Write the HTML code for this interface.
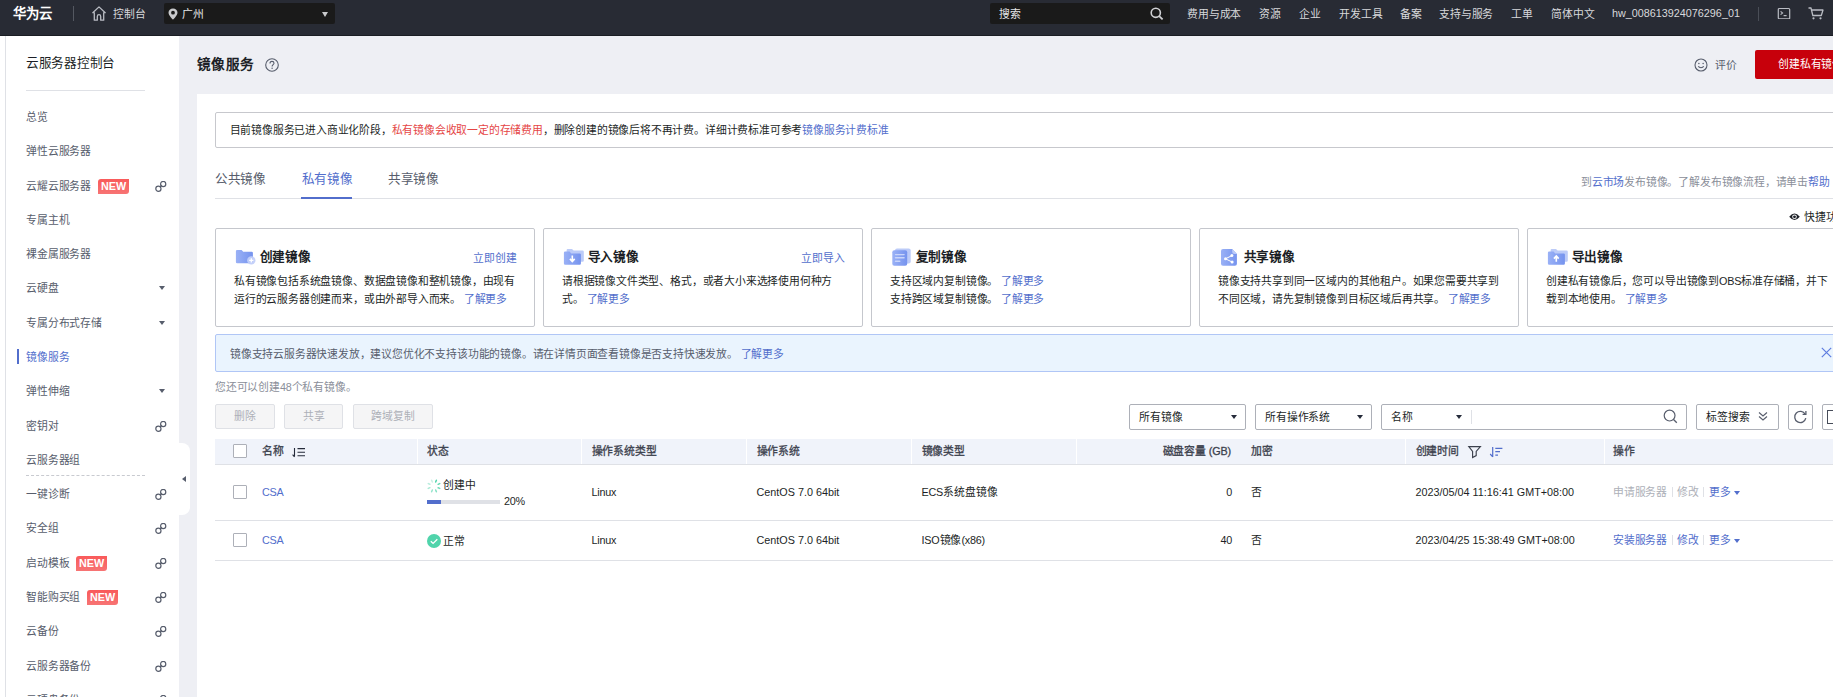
<!DOCTYPE html>
<html lang="zh-CN"><head><meta charset="utf-8">
<style>
*{box-sizing:border-box;margin:0;padding:0}
html,body{width:1833px;height:697px;overflow:hidden}
body{position:relative;background:#eeeff4;font-family:"Liberation Sans",sans-serif;font-size:10.8px;color:#1c1f26;letter-spacing:-0.2px}
.a{position:absolute;white-space:nowrap}
#hd{position:absolute;left:0;top:0;width:1833px;height:36px;background:#282b34;border-bottom:1px solid #1a1d23}
#hd .t{position:absolute;top:0;height:36px;line-height:29px;color:#d8d9dc;font-size:10.8px}
#sb{position:absolute;left:0;top:36px;width:179px;height:661px;background:#fff}
#sb .bl{position:absolute;left:5px;top:0;width:1px;height:661px;background:#dfe1e6}
#sb .it{position:absolute;left:26px;height:16px;line-height:16px;color:#575d6c;font-size:10.8px;white-space:nowrap}
.new{display:inline-block;position:absolute;height:15px;line-height:15px;margin-top:1px;padding:0 3px;background:linear-gradient(#f95a5a,#f77474);color:#fff;font-weight:bold;font-size:10.8px;letter-spacing:0;border-radius:3px 0 3px 0}
.lnk{position:absolute;left:155px;width:12px;height:12px;margin-top:1px}
.dd{position:absolute;left:159px;width:0;height:0;border-left:3px solid transparent;border-right:3px solid transparent;border-top:4px solid #575d6c}
#pn{position:absolute;left:197px;top:94px;width:1636px;height:603px;background:#fff}
.blue{color:#526ecc!important}
.tx{white-space:nowrap}
.card{border:1px solid #c5c7cd;background:#fff;border-radius:2px}
.btn{border:1px solid #dfe1e6;background:#f5f5f6;color:#adb0b8;text-align:center;line-height:23px;border-radius:2px}
.bi{display:inline-block;white-space:nowrap}
.j{text-align:justify;text-align-last:justify;white-space:nowrap}
.sel{border:1px solid #adb0b8;background:#fff;color:#1c1f26;border-radius:2px}
.sel span{position:absolute;left:9px;top:4px;line-height:16px}
.sel i{position:absolute;left:101px;top:10px;width:0;height:0;border-left:3px solid transparent;border-right:3px solid transparent;border-top:4px solid #252b3a}
.cb{width:14px;height:14px;border:1px solid #adb0b8;border-radius:1px;background:#fff}
.th{top:443px;height:16px;line-height:16px;color:#3c414d;-webkit-text-stroke:0.3px #3c414d}
.td{height:16px;line-height:16px;color:#1c1f26}
.sep{display:inline-block;width:1px;height:10px;background:#dfe1e6;margin:0 4.5px;vertical-align:-1px}

</style></head><body>

<!-- HEADER -->
<div id="hd">
  <div class="j t" style="width:39.3px;left:12.5px;font-size:13.4px;letter-spacing:0;font-weight:bold;color:#fff;line-height:28px">华为云</div>
  <div style="position:absolute;left:73px;top:6px;width:1px;height:15px;background:#545861"></div>
  <svg class="a" style="left:92px;top:6px" width="14" height="15" viewBox="0 0 14 15"><path d="M7 0.9 L13.2 6.7 H11.7 V14.2 H8.7 V10.4 A1.7 1.7 0 0 0 5.3 10.4 V14.2 H2.3 V6.7 H0.8 Z" fill="none" stroke="#b9bcc3" stroke-width="1.3" stroke-linejoin="round"/></svg>
  <div class="j t" style="width:32.7px;left:113px">控制台</div>
  <div style="position:absolute;left:164px;top:3px;width:171px;height:21px;background:#1a1a1a;border-radius:2px"></div>
  <svg class="a" style="left:168px;top:7.5px" width="10" height="12" viewBox="0 0 10 12"><path d="M5 0.4 C2.4 0.4 0.5 2.3 0.5 4.7 C0.5 7.4 5 11.6 5 11.6 C5 11.6 9.5 7.4 9.5 4.7 C9.5 2.3 7.6 0.4 5 0.4 Z M5 2.8 A1.9 1.9 0 1 1 5 6.6 A1.9 1.9 0 1 1 5 2.8 Z" fill="#c9cacd" fill-rule="evenodd"/></svg>
  <div class="j t" style="width:21.9px;left:182px;color:#e6e6e8">广州</div>
  <div style="position:absolute;left:322px;top:12px;width:0;height:0;border-left:3.6px solid transparent;border-right:3.6px solid transparent;border-top:5px solid #c9cacd"></div>

  <div style="position:absolute;left:990px;top:3px;width:180px;height:21px;background:#1a1a1a;border-radius:2px"></div>
  <div class="j t" style="width:21.9px;left:999px;color:#e6e6e8">搜索</div>
  <svg class="a" style="left:1150px;top:7px" width="14" height="13" viewBox="0 0 14 13"><circle cx="5.8" cy="5.8" r="4.6" fill="none" stroke="#d0d1d4" stroke-width="1.6"/><path d="M9.2 9.2 L12.6 12.4" stroke="#d0d1d4" stroke-width="1.8"/></svg>
  <div class="j t" style="width:54.3px;left:1187px">费用与成本</div>
  <div class="j t" style="width:21.9px;left:1259px">资源</div>
  <div class="j t" style="width:21.9px;left:1299px">企业</div>
  <div class="j t" style="width:43.5px;left:1339px">开发工具</div>
  <div class="j t" style="width:21.9px;left:1400px">备案</div>
  <div class="j t" style="width:54.3px;left:1439px">支持与服务</div>
  <div class="j t" style="width:21.9px;left:1511px">工单</div>
  <div class="j t" style="width:43.5px;left:1551px">简体中文</div>
  <div class="t" style="left:1612px;letter-spacing:0;line-height:27.5px">hw_008613924076296_01</div>
  <div style="position:absolute;left:1758px;top:7px;width:1px;height:14px;background:#4a4e57"></div>
  <svg class="a" style="left:1777px;top:7px" width="14" height="12" viewBox="0 0 14 12"><rect x="1.3" y="1.5" width="11.4" height="10.4" rx="1" fill="none" stroke="#b9bcc3" stroke-width="1.2"/><path d="M3.6 4.3 L5.6 6 L3.6 7.7" fill="none" stroke="#b9bcc3" stroke-width="1.1"/><path d="M6.6 8.6 H9.6" stroke="#b9bcc3" stroke-width="1.2"/></svg>
  <svg class="a" style="left:1808px;top:7px" width="16" height="13" viewBox="0 0 16 13"><path d="M0.5 1 H3 L4.8 8.5 H13.3 L15 3 H3.8" fill="none" stroke="#b9bcc3" stroke-width="1.3" stroke-linejoin="round"/><circle cx="5.5" cy="11.3" r="1.1" fill="#b9bcc3"/><circle cx="12.5" cy="11.3" r="1.1" fill="#b9bcc3"/></svg>
</div>

<!-- SIDEBAR -->
<div id="sb">
  <div class="bl"></div>
  <div class="j it" style="width:88.9px;top:17px;font-size:12.6px;letter-spacing:-0.35px;color:#1c1f26;height:20px;line-height:20px">云服务器控制台</div>
  <div style="position:absolute;left:26px;top:54px;width:119px;height:1px;background:#dfe1e6"></div>
  <div class="j it" style="width:21.9px;top:73.0px">总览</div>
  <div class="j it" style="width:65.1px;top:107.3px">弹性云服务器</div>
  <div class="j it" style="width:65.1px;top:141.6px">云耀云服务器</div>
  <div class="new" style="left:98px;top:142.1px">NEW</div>
  <svg class="lnk" style="top:143.6px" viewBox="0 0 12 12"><g fill="none" stroke="#575d6c" stroke-width="1.2"><circle cx="3.4" cy="7.7" r="2.6"/><circle cx="8.2" cy="3" r="2.6"/><path d="M4.8 6.3 L6.8 4.4"/></g></svg>
  <div class="j it" style="width:43.5px;top:175.8px">专属主机</div>
  <div class="j it" style="width:65.1px;top:210.1px">裸金属服务器</div>
  <div class="j it" style="width:32.7px;top:244.4px">云硬盘</div>
  <div class="dd" style="top:250.4px"></div>
  <div class="j it" style="width:75.9px;top:278.7px">专属分布式存储</div>
  <div class="dd" style="top:284.7px"></div>
  <div style="position:absolute;left:17px;top:312.8px;width:2px;height:15.5px;background:#526ecc"></div>
  <div class="j it" style="width:43.5px;top:313.0px;color:#526ecc">镜像服务</div>
  <div class="j it" style="width:43.5px;top:347.2px">弹性伸缩</div>
  <div class="dd" style="top:353.3px"></div>
  <div class="j it" style="width:32.7px;top:381.5px">密钥对</div>
  <svg class="lnk" style="top:383.5px" viewBox="0 0 12 12"><g fill="none" stroke="#575d6c" stroke-width="1.2"><circle cx="3.4" cy="7.7" r="2.6"/><circle cx="8.2" cy="3" r="2.6"/><path d="M4.8 6.3 L6.8 4.4"/></g></svg>
  <div class="j it" style="width:54.3px;top:415.8px">云服务器组</div>
  <div class="j it" style="width:43.5px;top:450.1px">一键诊断</div>
  <svg class="lnk" style="top:452.1px" viewBox="0 0 12 12"><g fill="none" stroke="#575d6c" stroke-width="1.2"><circle cx="3.4" cy="7.7" r="2.6"/><circle cx="8.2" cy="3" r="2.6"/><path d="M4.8 6.3 L6.8 4.4"/></g></svg>
  <div class="j it" style="width:32.7px;top:484.4px">安全组</div>
  <svg class="lnk" style="top:486.4px" viewBox="0 0 12 12"><g fill="none" stroke="#575d6c" stroke-width="1.2"><circle cx="3.4" cy="7.7" r="2.6"/><circle cx="8.2" cy="3" r="2.6"/><path d="M4.8 6.3 L6.8 4.4"/></g></svg>
  <div class="j it" style="width:43.5px;top:518.6px">启动模板</div>
  <div class="new" style="left:76px;top:519.1px">NEW</div>
  <svg class="lnk" style="top:520.6px" viewBox="0 0 12 12"><g fill="none" stroke="#575d6c" stroke-width="1.2"><circle cx="3.4" cy="7.7" r="2.6"/><circle cx="8.2" cy="3" r="2.6"/><path d="M4.8 6.3 L6.8 4.4"/></g></svg>
  <div class="j it" style="width:54.3px;top:552.9px">智能购买组</div>
  <div class="new" style="left:87px;top:553.4px">NEW</div>
  <svg class="lnk" style="top:554.9px" viewBox="0 0 12 12"><g fill="none" stroke="#575d6c" stroke-width="1.2"><circle cx="3.4" cy="7.7" r="2.6"/><circle cx="8.2" cy="3" r="2.6"/><path d="M4.8 6.3 L6.8 4.4"/></g></svg>
  <div class="j it" style="width:32.7px;top:587.2px">云备份</div>
  <svg class="lnk" style="top:589.2px" viewBox="0 0 12 12"><g fill="none" stroke="#575d6c" stroke-width="1.2"><circle cx="3.4" cy="7.7" r="2.6"/><circle cx="8.2" cy="3" r="2.6"/><path d="M4.8 6.3 L6.8 4.4"/></g></svg>
  <div class="j it" style="width:65.1px;top:621.5px">云服务器备份</div>
  <svg class="lnk" style="top:623.5px" viewBox="0 0 12 12"><g fill="none" stroke="#575d6c" stroke-width="1.2"><circle cx="3.4" cy="7.7" r="2.6"/><circle cx="8.2" cy="3" r="2.6"/><path d="M4.8 6.3 L6.8 4.4"/></g></svg>
  <div class="j it" style="width:54.3px;top:655.8px">云硬盘备份</div>
  <svg class="lnk" style="top:657.8px" viewBox="0 0 12 12"><g fill="none" stroke="#575d6c" stroke-width="1.2"><circle cx="3.4" cy="7.7" r="2.6"/><circle cx="8.2" cy="3" r="2.6"/><path d="M4.8 6.3 L6.8 4.4"/></g></svg>
  <div style="position:absolute;left:26px;top:439.4px;width:119px;height:0;border-top:1px dashed #c8cad0"></div>
  <div style="position:absolute;left:179px;top:406.8px;width:11px;height:72px;background:#fff;border-radius:0 8px 8px 0"></div>
  <div style="position:absolute;left:182px;top:439.9px;width:0;height:0;border-top:3px solid transparent;border-bottom:3px solid transparent;border-right:4px solid #575d6c"></div>
</div>

<!-- PANEL -->
<div id="pn"></div>
<!-- TITLE AREA -->
<div class="j a tx" style="width:57.5px;left:197px;top:55.5px;height:18px;line-height:18px;font-size:13.6px;letter-spacing:0.3px;font-weight:bold;color:#1c1f26">镜像服务</div>
<svg class="a" style="left:265px;top:58px" width="14" height="14" viewBox="0 0 14 14"><circle cx="7" cy="7" r="6.3" fill="none" stroke="#575d6c" stroke-width="1.1"/><path d="M5 5.4 C5 4.1 5.9 3.4 7 3.4 C8.1 3.4 9 4.1 9 5.2 C9 6.5 7.1 6.7 7.1 8.4" fill="none" stroke="#575d6c" stroke-width="1.1"/><circle cx="7.1" cy="10.3" r="0.7" fill="#575d6c"/></svg>
<svg class="a" style="left:1694px;top:58px" width="14" height="14" viewBox="0 0 14 14"><circle cx="7" cy="7" r="6" fill="none" stroke="#575d6c" stroke-width="1.1"/><circle cx="4.9" cy="5.6" r="0.75" fill="#575d6c"/><circle cx="9.1" cy="5.6" r="0.75" fill="#575d6c"/><path d="M4.3 8.3 C5.3 10.2 8.7 10.2 9.7 8.3" fill="none" stroke="#575d6c" stroke-width="1.1"/></svg>
<div class="j a tx" style="width:21.9px;left:1715px;top:57px;height:16px;line-height:16px;color:#575d6c">评价</div>
<div class="a" style="left:1755px;top:50px;width:110px;height:29px;background:#c7000b;border-radius:2px"></div>
<div class="j a tx" style="width:65.1px;left:1778px;top:55.8px;height:16px;line-height:16px;color:#fff">创建私有镜像</div>

<!-- NOTICE -->
<div class="a" style="left:215px;top:112px;width:1640px;height:36px;border:1px solid #c7c8cd;border-radius:2px"></div>
<div class="j a tx" style="width:659.1px;left:229.5px;top:122px;height:16px;line-height:16px;color:#1c1f26">目前镜像服务已进入商业化阶段，<span style="color:#e54545">私有镜像会收取一定的存储费用</span>，删除创建的镜像后将不再计费。详细计费标准可参考<span class="blue">镜像服务计费标准</span></div>

<!-- TABS -->
<div class="j a tx" style="width:50.9px;left:215px;top:170px;height:18px;line-height:18px;font-size:12.6px;letter-spacing:-0.35px;color:#575d6c">公共镜像</div>
<div class="j a tx" style="width:50.9px;left:301.5px;top:170px;height:18px;line-height:18px;font-size:12.6px;letter-spacing:-0.35px;color:#526ecc">私有镜像</div>
<div class="j a tx" style="width:50.9px;left:388px;top:170px;height:18px;line-height:18px;font-size:12.6px;letter-spacing:-0.35px;color:#575d6c">共享镜像</div>
<div class="a" style="left:215px;top:198px;width:1640px;height:1px;background:#dfe1e6"></div>
<div class="a" style="left:301px;top:196.5px;width:51px;height:2px;background:#526ecc"></div>
<div class="j a tx" style="width:248.7px;left:1581px;top:174px;height:16px;line-height:16px;color:#8a8e99">到<span class="blue">云市场</span>发布镜像。了解发布镜像流程，请单击<span class="blue">帮助</span></div>
<svg class="a" style="left:1789px;top:212.5px" width="11" height="8" viewBox="0 0 11 8"><path d="M0.2 3.8 Q5.5 -2.6 10.8 3.8 Q5.5 10.2 0.2 3.8 Z" fill="#1c1f26"/><circle cx="5.5" cy="3.8" r="2.3" fill="#fff"/><circle cx="5.5" cy="3.8" r="1.4" fill="#1c1f26"/></svg>
<div class="j a tx" style="width:43.5px;left:1804px;top:208.5px;height:16px;line-height:16px;color:#1c1f26">快捷功能</div>

<!-- CARDS -->
<div class="a card" style="left:215px;top:228px;width:320px;height:99px"></div>
<svg class="a" style="left:235px;top:249px;overflow:visible" width="22" height="18" viewBox="0 0 22 18"><defs><linearGradient id="gC" x1="0" y1="0" x2="1" y2="0"><stop offset="0" stop-color="#9ab1f6"/><stop offset="1" stop-color="#7593ee"/></linearGradient></defs><path d="M0.9 2.2 Q0.9 1.0 2.1 1.0 H6.6 L8.2 2.8 H16.7 Q17.9 2.8 17.9 4.0 V13.0 Q17.9 14.200000000000001 16.7 14.200000000000001 H2.1 Q0.9 14.200000000000001 0.9 13.0 Z" fill="url(#gC)"/><circle cx="16.3" cy="11.4" r="4.2" fill="#c2cff9" opacity="0.95"/><path d="M14.2 11.4 H18.4 M16.3 9.3 V13.5" stroke="#fff" stroke-width="1.3"/></svg>
<div class="j a tx" style="width:50.9px;left:259.5px;top:247.5px;height:18px;line-height:18px;font-size:12.6px;letter-spacing:-0.35px;font-weight:bold;color:#1c1f26">创建镜像</div>
<div class="j a tx blue" style="width:43.5px;left:473px;top:250px;height:16px;line-height:16px">立即创建</div>
<div class="j a tx" style="width:281.1px;left:234px;top:272px;line-height:18px;color:#1c1f26">私有镜像包括系统盘镜像、数据盘镜像和整机镜像，由现有</div>
<div class="j a tx" style="width:273.1px;left:234px;top:290px;line-height:18px;color:#1c1f26">运行的云服务器创建而来，或由外部导入而来。 <span class="blue">了解更多</span></div>
<div class="a card" style="left:543px;top:228px;width:320px;height:99px"></div>
<svg class="a" style="left:563px;top:249px;overflow:visible" width="22" height="18" viewBox="0 0 22 18"><defs><linearGradient id="gI" x1="0" y1="0" x2="1" y2="0"><stop offset="0" stop-color="#9ab1f6"/><stop offset="1" stop-color="#7593ee"/></linearGradient></defs><path d="M3.6 1.2 Q3.6 0 4.8 0 H9 L10.6 1.6 H19.6 Q20.8 1.6 20.8 2.8 V11.6 Q20.8 12.8 19.6 12.8 H4 Z" fill="#bccbf8"/><path d="M0.9 3.8 Q0.9 2.6 2.1 2.6 H6.6 L8.2 4.4 H16.7 Q17.9 4.4 17.9 5.6 V14.6 Q17.9 15.8 16.7 15.8 H2.1 Q0.9 15.8 0.9 14.6 Z" fill="url(#gI)"/><path d="M9.3 6.6 V12.4 M6.9 9.9 L9.3 12.5 L11.7 9.9" fill="none" stroke="#fff" stroke-width="1.6"/></svg>
<div class="j a tx" style="width:50.9px;left:587.5px;top:247.5px;height:18px;line-height:18px;font-size:12.6px;letter-spacing:-0.35px;font-weight:bold;color:#1c1f26">导入镜像</div>
<div class="j a tx blue" style="width:43.5px;left:801px;top:250px;height:16px;line-height:16px">立即导入</div>
<div class="j a tx" style="width:270.3px;left:562px;top:272px;line-height:18px;color:#1c1f26">请根据镜像文件类型、格式，或者大小来选择使用何种方</div>
<div class="j a tx" style="width:67.9px;left:562px;top:290px;line-height:18px;color:#1c1f26">式。 <span class="blue">了解更多</span></div>
<div class="a card" style="left:871px;top:228px;width:320px;height:99px"></div>
<svg class="a" style="left:891px;top:249px;overflow:visible" width="22" height="18" viewBox="0 0 22 18"><defs><linearGradient id="gP" x1="0" y1="0" x2="1" y2="0"><stop offset="0" stop-color="#9ab1f6"/><stop offset="1" stop-color="#7593ee"/></linearGradient></defs><rect x="4" y="-0.6" width="15.7" height="15.2" rx="2" fill="#bccbf8"/><rect x="1.3" y="1.2" width="14.9" height="15.6" rx="2" fill="url(#gP)"/><path d="M4.5 5.6 H13.1 M4.5 8.8 H13.1 M4.5 12.2 H8.8" stroke="#c9d5fa" stroke-width="1.4" stroke-linecap="round"/></svg>
<div class="j a tx" style="width:50.9px;left:915.5px;top:247.5px;height:18px;line-height:18px;font-size:12.6px;letter-spacing:-0.35px;font-weight:bold;color:#1c1f26">复制镜像</div>
<div class="j a tx" style="width:154.3px;left:890px;top:272px;line-height:18px;color:#1c1f26">支持区域内复制镜像。 <span class="blue">了解更多</span></div>
<div class="j a tx" style="width:154.3px;left:890px;top:290px;line-height:18px;color:#1c1f26">支持跨区域复制镜像。 <span class="blue">了解更多</span></div>
<div class="a card" style="left:1199px;top:228px;width:320px;height:99px"></div>
<svg class="a" style="left:1219px;top:249px;overflow:visible" width="22" height="18" viewBox="0 0 22 18"><defs><linearGradient id="gS" x1="0" y1="0" x2="1" y2="0"><stop offset="0" stop-color="#9ab1f6"/><stop offset="1" stop-color="#7593ee"/></linearGradient></defs><path d="M4 0.1 H13.2 L17.9 4.9 V14.8 Q17.9 16.8 15.9 16.8 H4 Q2 16.8 2 14.8 V2.1 Q2 0.1 4 0.1 Z" fill="url(#gS)"/><path d="M13.2 0.1 L17.9 4.9 H15.2 Q13.2 4.9 13.2 2.9 Z" fill="#bccbf8"/><path d="M12.9 6.6 L6.5 9.8 L13.1 13" fill="none" stroke="#fff" stroke-width="1"/><circle cx="12.9" cy="6.6" r="1.5" fill="#fff"/><circle cx="6.5" cy="9.8" r="1.5" fill="#fff"/><circle cx="13.1" cy="13" r="1.5" fill="#fff"/></svg>
<div class="j a tx" style="width:50.9px;left:1243.5px;top:247.5px;height:18px;line-height:18px;font-size:12.6px;letter-spacing:-0.35px;font-weight:bold;color:#1c1f26">共享镜像</div>
<div class="j a tx" style="width:281.1px;left:1218px;top:272px;line-height:18px;color:#1c1f26">镜像支持共享到同一区域内的其他租户。如果您需要共享到</div>
<div class="j a tx" style="width:273.1px;left:1218px;top:290px;line-height:18px;color:#1c1f26">不同区域，请先复制镜像到目标区域后再共享。 <span class="blue">了解更多</span></div>
<div class="a card" style="left:1527px;top:228px;width:320px;height:99px"></div>
<svg class="a" style="left:1547px;top:249px;overflow:visible" width="22" height="18" viewBox="0 0 22 18"><defs><linearGradient id="gE" x1="0" y1="0" x2="1" y2="0"><stop offset="0" stop-color="#9ab1f6"/><stop offset="1" stop-color="#7593ee"/></linearGradient></defs><path d="M3.6 1.2 Q3.6 0 4.8 0 H9 L10.6 1.6 H19.6 Q20.8 1.6 20.8 2.8 V11.6 Q20.8 12.8 19.6 12.8 H4 Z" fill="#bccbf8"/><path d="M0.9 3.8 Q0.9 2.6 2.1 2.6 H6.6 L8.2 4.4 H16.7 Q17.9 4.4 17.9 5.6 V14.6 Q17.9 15.8 16.7 15.8 H2.1 Q0.9 15.8 0.9 14.6 Z" fill="url(#gE)"/><path d="M9.3 12.8 V7.2 M6.9 9.6 L9.3 7 L11.7 9.6" fill="none" stroke="#fff" stroke-width="1.6"/></svg>
<div class="j a tx" style="width:50.9px;left:1571.5px;top:247.5px;height:18px;line-height:18px;font-size:12.6px;letter-spacing:-0.35px;font-weight:bold;color:#1c1f26">导出镜像</div>
<div class="j a tx" style="width:281.7px;left:1546px;top:272px;line-height:18px;color:#1c1f26">创建私有镜像后，您可以导出镜像到OBS标准存储桶，并下</div>
<div class="j a tx" style="width:121.9px;left:1546px;top:290px;line-height:18px;color:#1c1f26">载到本地使用。 <span class="blue">了解更多</span></div>

<!-- INFO BAR -->
<div class="a" style="left:215px;top:334px;width:1640px;height:38px;background:#eaf4fe;border:1px solid #b0c6f6;border-radius:2px"></div>
<div class="j a tx" style="width:553.9px;left:230px;top:345.5px;height:16px;line-height:16px;color:#575d6c">镜像支持云服务器快速发放，建议您优化不支持该功能的镜像。请在详情页面查看镜像是否支持快速发放。 <span class="blue">了解更多</span></div>
<svg class="a" style="left:1821px;top:347px" width="11" height="11" viewBox="0 0 11 11"><path d="M0.8 0.8 L10.2 10.2 M10.2 0.8 L0.8 10.2" stroke="#5e7ce0" stroke-width="1.2"/></svg>

<div class="j a tx" style="width:141.5px;left:215px;top:378.5px;height:16px;line-height:16px;color:#8a8e99">您还可以创建48个私有镜像。</div>

<!-- BUTTONS -->
<div class="a btn" style="left:215px;top:404px;width:59.5px;height:25px"><span class="j bi" style="width:21.9px">删除</span></div>
<div class="a btn" style="left:284px;top:404px;width:59px;height:25px"><span class="j bi" style="width:21.9px">共享</span></div>
<div class="a btn" style="left:352.5px;top:404px;width:80.5px;height:25px"><span class="j bi" style="width:43.5px">跨域复制</span></div>

<!-- FILTERS -->
<div class="a sel" style="left:1129px;top:404px;width:117px;height:26px"><span class="j" style="width:43.5px">所有镜像</span><i></i></div>
<div class="a sel" style="left:1255px;top:404px;width:117px;height:26px"><span class="j" style="width:65.1px">所有操作系统</span><i></i></div>
<div class="a sel" style="left:1381px;top:404px;width:306px;height:26px"><span class="j" style="width:21.9px">名称</span><i style="left:74px"></i></div>
<div class="a" style="left:1471px;top:410px;width:1px;height:14px;background:#dfe1e6"></div>
<svg class="a" style="left:1663px;top:409px" width="15" height="15" viewBox="0 0 15 15"><circle cx="6.6" cy="6.6" r="5.4" fill="none" stroke="#575d6c" stroke-width="1.2"/><path d="M10.5 10.5 L13.8 13.8" stroke="#575d6c" stroke-width="1.3"/></svg>
<div class="a sel" style="left:1696px;top:404px;width:83px;height:26px"><span class="j" style="width:43.5px">标签搜索</span></div>
<svg class="a" style="left:1758px;top:411px" width="10" height="11" viewBox="0 0 10 11"><path d="M1 1.5 L5 5 L9 1.5 M1 5.5 L5 9 L9 5.5" fill="none" stroke="#575d6c" stroke-width="1.1"/></svg>
<div class="a sel" style="left:1788px;top:404px;width:25px;height:26px"></div>
<svg class="a" style="left:1793px;top:410px" width="15" height="14" viewBox="0 0 15 14"><path d="M12.2 4.2 A5.6 5.6 0 1 0 12.8 8.2" fill="none" stroke="#575d6c" stroke-width="1.3"/><path d="M9.6 4.4 H12.9 V1.1" fill="none" stroke="#575d6c" stroke-width="1.3"/></svg>
<div class="a sel" style="left:1822px;top:404px;width:25px;height:26px"></div>
<div class="a" style="left:1827px;top:410px;width:9px;height:14px;border:1.5px solid #464c59"></div>

<!-- TABLE -->
<div class="a" style="left:215px;top:439px;width:1640px;height:26px;background:#f0f3fa;border-bottom:1px solid #dfe1e6"></div>
<div class="a" style="left:416.5px;top:439px;width:1.5px;height:25px;background:#fff"></div>
<div class="a" style="left:580.5px;top:439px;width:1.5px;height:25px;background:#fff"></div>
<div class="a" style="left:745.5px;top:439px;width:1.5px;height:25px;background:#fff"></div>
<div class="a" style="left:910.5px;top:439px;width:1.5px;height:25px;background:#fff"></div>
<div class="a" style="left:1075.5px;top:439px;width:1.5px;height:25px;background:#fff"></div>
<div class="a" style="left:1404.5px;top:439px;width:1.5px;height:25px;background:#fff"></div>
<div class="a" style="left:1603.5px;top:439px;width:1.5px;height:25px;background:#fff"></div>
<div class="a cb" style="left:233px;top:444px"></div>
<div class="j a th" style="width:21.9px;left:262px">名称</div>
<svg class="a" style="left:291.5px;top:446.8px" width="14" height="11" viewBox="0 0 14 11"><path d="M2.5 1 V9.6 M0.6 7.6 L2.5 9.8" fill="none" stroke="#252b3a" stroke-width="1.1"/><path d="M5.5 1.6 H13 M5.5 5.2 H13 M5.5 8.8 H13" stroke="#252b3a" stroke-width="1.1"/></svg>
<div class="j a th" style="width:21.9px;left:426.5px">状态</div>
<div class="j a th" style="width:65.1px;left:591.5px">操作系统类型</div>
<div class="j a th" style="width:43.5px;left:756.5px">操作系统</div>
<div class="j a th" style="width:43.5px;left:921.5px">镜像类型</div>
<div class="j a th" style="width:68.3px;left:1162.5px">磁盘容量 (GB)</div>
<div class="j a th" style="width:21.9px;left:1250.5px">加密</div>
<div class="j a th" style="width:43.5px;left:1415.5px">创建时间</div>
<svg class="a" style="left:1467px;top:445px" width="15" height="14" viewBox="0 0 15 14"><path d="M1.8 1.6 H13.4 L9.2 6.4 V10.6 L5.6 12.6 V6.4 Z" fill="none" stroke="#3c414d" stroke-width="1.15" stroke-linejoin="miter"/></svg>
<svg class="a" style="left:1489px;top:446px" width="15" height="12" viewBox="0 0 15 12"><path d="M3.7 1 V11 M1.2 8 L3.7 10.8" fill="none" stroke="#526ecc" stroke-width="1.2"/><path d="M6.3 2.4 H13.4 M6.3 5.7 H11 M6.3 9.1 H9" stroke="#526ecc" stroke-width="1.2"/></svg>
<div class="j a th" style="width:21.9px;left:1613px">操作</div>

<!-- ROW 1 -->
<div class="a" style="left:215px;top:520px;width:1640px;height:1px;background:#dfe1e6"></div>
<div class="a cb" style="left:233px;top:485px"></div>
<div class="a td blue" style="left:262px;top:484px">CSA</div>
<svg class="a" style="left:427px;top:479px" width="14" height="14" viewBox="0 0 14 14"><g stroke="#50d4ab" stroke-width="1.5" stroke-linecap="round" transform="rotate(22.5 7 7)"><path d="M7 0.8 V2.6" opacity="1"/><path d="M11.4 2.6 L10.1 3.9" opacity=".9"/><path d="M13.2 7 H11.4" opacity=".8"/><path d="M11.4 11.4 L10.1 10.1" opacity=".7"/><path d="M7 13.2 V11.4" opacity=".6"/><path d="M2.6 11.4 L3.9 10.1" opacity=".5"/><path d="M0.8 7 H2.6" opacity=".4"/><path d="M2.6 2.6 L3.9 3.9" opacity=".3"/></g></svg>
<div class="j a td" style="width:32.7px;left:443px;top:477px">创建中</div>
<div class="a" style="left:427px;top:500px;width:73px;height:4px;background:#dfe1e6"></div>
<div class="a" style="left:427px;top:500px;width:14px;height:4px;background:#526ecc"></div>
<div class="a td" style="left:504px;top:493px">20%</div>
<div class="a td" style="left:591.5px;top:484px">Linux</div>
<div class="a td" style="left:756.5px;top:484px;letter-spacing:0">CentOS 7.0 64bit</div>
<div class="j a td" style="width:75.9px;left:921.5px;top:484px">ECS系统盘镜像</div>
<div class="a td" style="left:1182px;top:484px;width:50px;text-align:right">0</div>
<div class="j a td" style="width:11.1px;left:1250.5px;top:484px">否</div>
<div class="a td" style="left:1415.5px;top:484px;letter-spacing:0">2023/05/04 11:16:41 GMT+08:00</div>
<div class="j a td" style="width:117.5px;left:1613px;top:484px;color:#adb0b8">申请服务器<i class="sep"></i>修改<i class="sep"></i><span class="blue">更多</span></div>
<div class="a" style="left:1734px;top:491px;width:0;height:0;border-left:3px solid transparent;border-right:3px solid transparent;border-top:4px solid #526ecc"></div>

<!-- ROW 2 -->
<div class="a" style="left:215px;top:560px;width:1640px;height:1px;background:#dfe1e6"></div>
<div class="a cb" style="left:233px;top:533px"></div>
<div class="a td blue" style="left:262px;top:532px">CSA</div>
<svg class="a" style="left:427px;top:534px" width="14" height="14" viewBox="0 0 14 14"><circle cx="7" cy="7" r="7" fill="#50d4ab"/><path d="M3.8 7.2 L6.1 9.4 L10.3 5.2" fill="none" stroke="#fff" stroke-width="1.3"/></svg>
<div class="j a td" style="width:21.9px;left:443px;top:533px">正常</div>
<div class="a td" style="left:591.5px;top:532px">Linux</div>
<div class="a td" style="left:756.5px;top:532px;letter-spacing:0">CentOS 7.0 64bit</div>
<div class="j a td" style="width:63.5px;left:921.5px;top:532px">ISO镜像(x86)</div>
<div class="a td" style="left:1182px;top:532px;width:50px;text-align:right">40</div>
<div class="j a td" style="width:11.1px;left:1250.5px;top:532px">否</div>
<div class="a td" style="left:1415.5px;top:532px;letter-spacing:0">2023/04/25 15:38:49 GMT+08:00</div>
<div class="j a td blue" style="width:117.5px;left:1613px;top:532px">安装服务器<i class="sep"></i>修改<i class="sep"></i>更多</div>
<div class="a" style="left:1734px;top:539px;width:0;height:0;border-left:3px solid transparent;border-right:3px solid transparent;border-top:4px solid #526ecc"></div>


</body></html>
